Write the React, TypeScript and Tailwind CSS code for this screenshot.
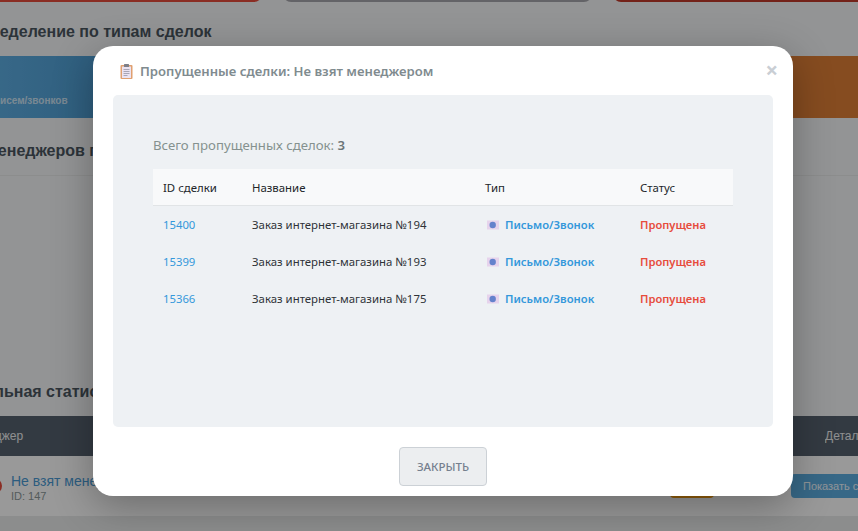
import React from "react";

const rows = [
  { id: "15400", name: "Заказ интернет-магазина №194" },
  { id: "15399", name: "Заказ интернет-магазина №193" },
  { id: "15366", name: "Заказ интернет-магазина №175" },
];

function ClipboardIcon() {
  return (
    <svg width="13" height="15" viewBox="0 0 13 15" className="shrink-0">
      <rect x="0.5" y="1" width="12" height="14" rx="1" fill="#e0a070" />
      <rect x="2" y="2.5" width="9" height="11.5" fill="#ebe3f2" />
      <rect x="4" y="0" width="5" height="3" rx="0.5" fill="#7d7f88" />
      <path d="M3.5 5.5h6M3.5 7.5h6M3.5 9.5h6M3.5 11.5h4" stroke="#a9a6b6" strokeWidth="1" />
    </svg>
  );
}

function MailIcon() {
  return (
    <svg width="14" height="10" viewBox="0 0 14 10" className="shrink-0">
      <rect x="2" y="0.5" width="12" height="9" fill="#e6d3ec" />
      <circle cx="7.7" cy="5" r="3.2" fill="#6482cc" />
    </svg>
  );
}

export default function App() {
  return (
    <div className="relative w-[858px] h-[531px] overflow-hidden bg-[#f6f7f8] font-['Liberation_Sans',sans-serif]">
      {/* Page behind the dialog */}
      <div className="flex h-[2px] items-end">
        <div className="w-[262px] h-[20px] shrink-0 rounded-br-[8px] bg-[#e74c3c]" />
        <div className="ml-[21px] w-[309px] h-[20px] shrink-0 rounded-b-[8px] bg-[#a6a6ac]" />
        <div className="ml-[21px] flex-1 h-[20px] rounded-bl-[8px] bg-[#c0392b]" />
      </div>
      <h2 className="mt-[20px] -ml-[48px] h-[19px] text-base leading-[19px] font-bold text-[#4a5560] whitespace-nowrap">
        Распределение по типам сделок
      </h2>
      <div className="mt-[15px] h-[62px] flex justify-between">
        <div className="w-[200px] bg-gradient-to-r from-[#5dade2] to-[#3f8fc6] pt-[37px] text-[10px] font-bold text-white/70 whitespace-nowrap">
          <span className="block -ml-[6px]">писем/звонков</span>
        </div>
        <div className="w-[200px] bg-[#e07f36]" />
      </div>
      <h2 className="mt-[23px] -ml-[14px] h-[19px] text-base leading-[19px] font-bold text-[#4a5560] whitespace-nowrap">
        менеджеров по
      </h2>
      <div className="mt-[15px] h-px bg-[#e9ebec]" />
      <h2 className="mt-[206px] -ml-[95px] h-[19px] text-base leading-[19px] font-bold text-[#4a5560] whitespace-nowrap">
        Индивидуальная статистика
      </h2>
      <div className="mt-[15px] h-[40px] bg-[#55626f] flex items-center justify-between text-xs text-white/90">
        <span className="-ml-[35px]">Менеджер</span>
        <span className="w-[33px] overflow-hidden whitespace-nowrap">Детали</span>
      </div>
      <div className="relative h-[60px] bg-white flex items-center">
        <div className="absolute -left-[14px] top-[22px] w-4 h-4 rounded-full bg-[#e74c3c]" />
        <div className="ml-[11px] mt-[2px] flex flex-col">
          <span className="text-sm leading-[17px] text-[#4a9ad4] whitespace-nowrap">Не взят менеджером</span>
          <span className="text-[11px] leading-[12px] text-[#8c9899]">ID: 147</span>
        </div>
        <div className="absolute left-[670px] top-[20px] w-[44px] h-[22px] rounded bg-[#f39c12]" />
        <div className="absolute left-[791px] top-[18px] w-[80px] h-[24px] rounded bg-[#5dade2] pl-[12px] text-[11px] leading-[24px] text-white/90 whitespace-nowrap overflow-hidden">
          Показать сделки
        </div>
      </div>
      <div className="h-[15px] bg-[#e9ebec]" />

      {/* Dialog overlay */}
      <div className="absolute inset-0 bg-black/40">
        <div className="ml-[93px] mt-[46px] w-[700px] h-[450px] rounded-[20px] bg-white shadow-[0_10px_40px_rgba(0,0,0,0.3)] flex flex-col font-['Noto_Sans',sans-serif]">
          <div className="h-[49px] pl-[27px] pr-[15px] flex items-center justify-between">
            <div className="flex items-center gap-[7px] mt-[2px]">
              <ClipboardIcon />
              <span className="text-[13.13px] font-semibold text-[#808b8f]">Пропущенные сделки: Не взят менеджером</span>
            </div>
            <span className="text-[22px] leading-none font-bold text-[#c9ced4] -mt-[3px]">×</span>
          </div>
          <div className="mx-[20px] h-[332px] rounded-[5px] bg-[#eef1f4] px-[40px] pt-[40px]">
            <p className="h-[20px] text-[13.2px] leading-[20px] text-[#85918f]">
              Всего пропущенных сделок: <b className="font-semibold text-[#6c7678]">3</b>
            </p>
            <table className="mt-[14px] w-[580px] table-fixed border-separate border-spacing-0 text-[11.4px] text-[#2f3338]">
              <thead>
                <tr className="h-[37px] bg-[#f8f9fa] text-left">
                  <th className="w-[99px] pl-[10px] pt-px border-b border-[#e1e4e6] font-normal text-[#212529]">ID сделки</th>
                  <th className="w-[233px] pt-px border-b border-[#e1e4e6] font-normal text-[#212529]">Название</th>
                  <th className="w-[155px] pt-px border-b border-[#e1e4e6] font-normal text-[#212529]">Тип</th>
                  <th className="pt-px border-b border-[#e1e4e6] font-normal text-[#212529]">Статус</th>
                </tr>
              </thead>
              <tbody>
                {rows.map((r) => (
                  <tr key={r.id} className="h-[37px]">
                    <td className="pl-[10px] pt-px text-[#3498db] text-[11.3px]">{r.id}</td>
                    <td className="pt-px">{r.name}</td>
                    <td className="pt-px">
                      <span className="flex items-center gap-[6px] text-[11.25px] font-semibold text-[#3498db]">
                        <MailIcon />
                        Письмо/Звонок
                      </span>
                    </td>
                    <td className="pt-px text-[11.2px] font-semibold text-[#e74c3c]">Пропущена</td>
                  </tr>
                ))}
              </tbody>
            </table>
          </div>
          <div className="flex justify-center pt-[20px]">
            <button className="w-[88px] h-[39px] rounded-[4px] border border-[#ccd1d6] bg-[#eceef0] text-[11.5px] font-medium text-[#757f8e]">
              ЗАКРЫТЬ
            </button>
          </div>
        </div>
      </div>
    </div>
  );
}
